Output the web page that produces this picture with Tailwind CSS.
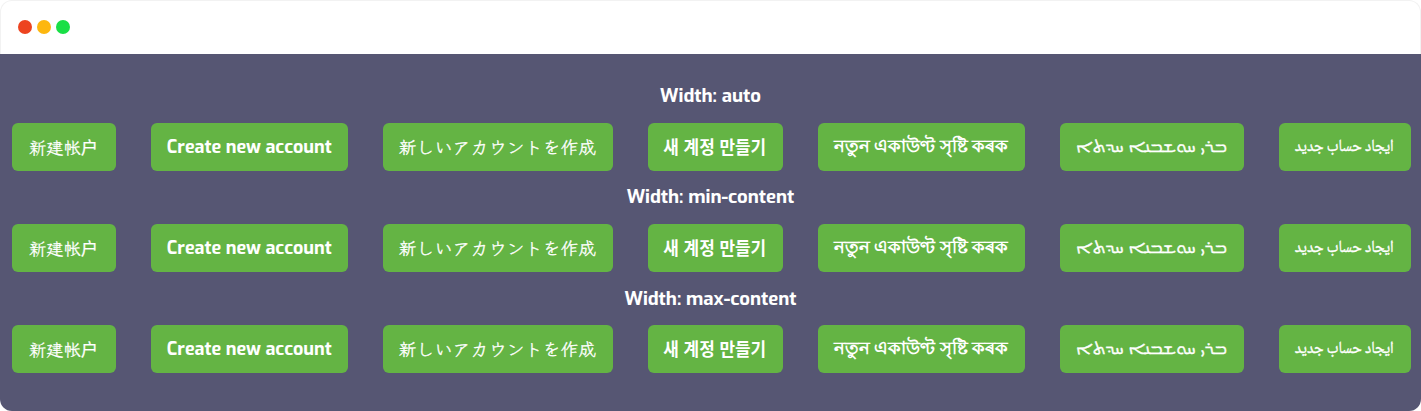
<!DOCTYPE html>
<html lang="en">
<head>
<meta charset="utf-8">
<title>Button widths</title>
<script src="https://cdn.jsdelivr.net/npm/@tailwindcss/browser@4"></script>
</head>
<body class="bg-white">
<div class="h-[411px] w-[1421px] overflow-hidden bg-white font-['Exo','Exo_2','Roboto','Noto_Sans','Noto_Sans_CJK_KR',sans-serif] text-white">
  <header class="flex h-[54px] items-center gap-[5px] rounded-t-xl border border-b-0 border-[#f2f2f2] bg-white pb-px pl-[17px]">
    <i class="size-[14px] rounded-full bg-[#ed4420]"></i>
    <i class="size-[14px] rounded-full bg-[#fdb70f]"></i>
    <i class="size-[14px] rounded-full bg-[#19df46]"></i>
  </header>
  <main id="rows" class="flex h-[357px] flex-col rounded-b-xl bg-[#565673] pt-[26.6px]"></main>
</div>
<template id="row">
  <section class="h-[101.4px]">
    <h2 class="flex h-[28px] items-center justify-center pt-[3px] text-[18.6px] leading-[28px] font-bold whitespace-nowrap"><span></span></h2>
    <div class="mt-[14px] flex gap-[35px] pl-[12px] text-[18px] leading-[47px] font-bold whitespace-nowrap *:flex *:h-12 *:shrink-0 *:justify-center *:rounded-md *:bg-[#64b444]">
      <button class="w-[104px] pr-px"><span class="font-['LXGW_WenKai','LXGW_WenKai_TC','Klee_One','Noto_Sans_CJK_SC',sans-serif] text-[17.3px] font-normal [-webkit-text-stroke:0.2px_white]" lang="zh">新建帐<span class="font-['Noto_Sans_CJK_SC',sans-serif]">户</span></span></button>
      <button class="w-[196.5px]"><span class="pt-px">Create new account</span></button>
      <button class="w-[230px]"><span class="font-['Klee_One','Noto_Sans_CJK_JP',sans-serif] text-[18px] font-normal [-webkit-text-stroke:0.4px_white]" lang="ja">新しいアカウントを作成</span></button>
      <button class="w-[135px]"><span class="inline-block scale-x-[.94] font-['Noto_Sans_CJK_KR',sans-serif] text-[18px] font-bold" lang="ko">새 계정 만들기</span></button>
      <button class="w-[207px]"><span class="text-[18px] font-bold" lang="as">নতুন একাউণ্ট সৃষ্টি কৰক</span></button>
      <button class="w-[184px]"><span class="font-['Noto_Sans_Syriac_Estrangela','Noto_Sans_Syriac','Estrangelo_Edessa',sans-serif] inline-block translate-y-[2px] text-[17.7px] font-normal [-webkit-text-stroke:0.4px_white]" lang="syr" dir="rtl">ܒܪܝ ܚܘܫܒܢܐ ܚܕܬܐ</span></button>
      <button class="w-[132px]"><span class="font-['Noto_Naskh_Arabic','DejaVu_Sans',sans-serif] inline-block translate-y-[1px] scale-x-[.88] text-[17px] font-normal [-webkit-text-stroke:0.4px_white]" lang="ar" dir="rtl">ايجاد حساب جديد</span></button>
    </div>
  </section>
</template>
<script>
const rows = document.getElementById('rows');
for (const label of ['Width: auto', 'Width: min-content', 'Width: max-content']) {
  const row = document.getElementById('row').content.cloneNode(true);
  row.querySelector('h2 span').textContent = label;
  rows.append(row);
}
</script>
</body>
</html>
